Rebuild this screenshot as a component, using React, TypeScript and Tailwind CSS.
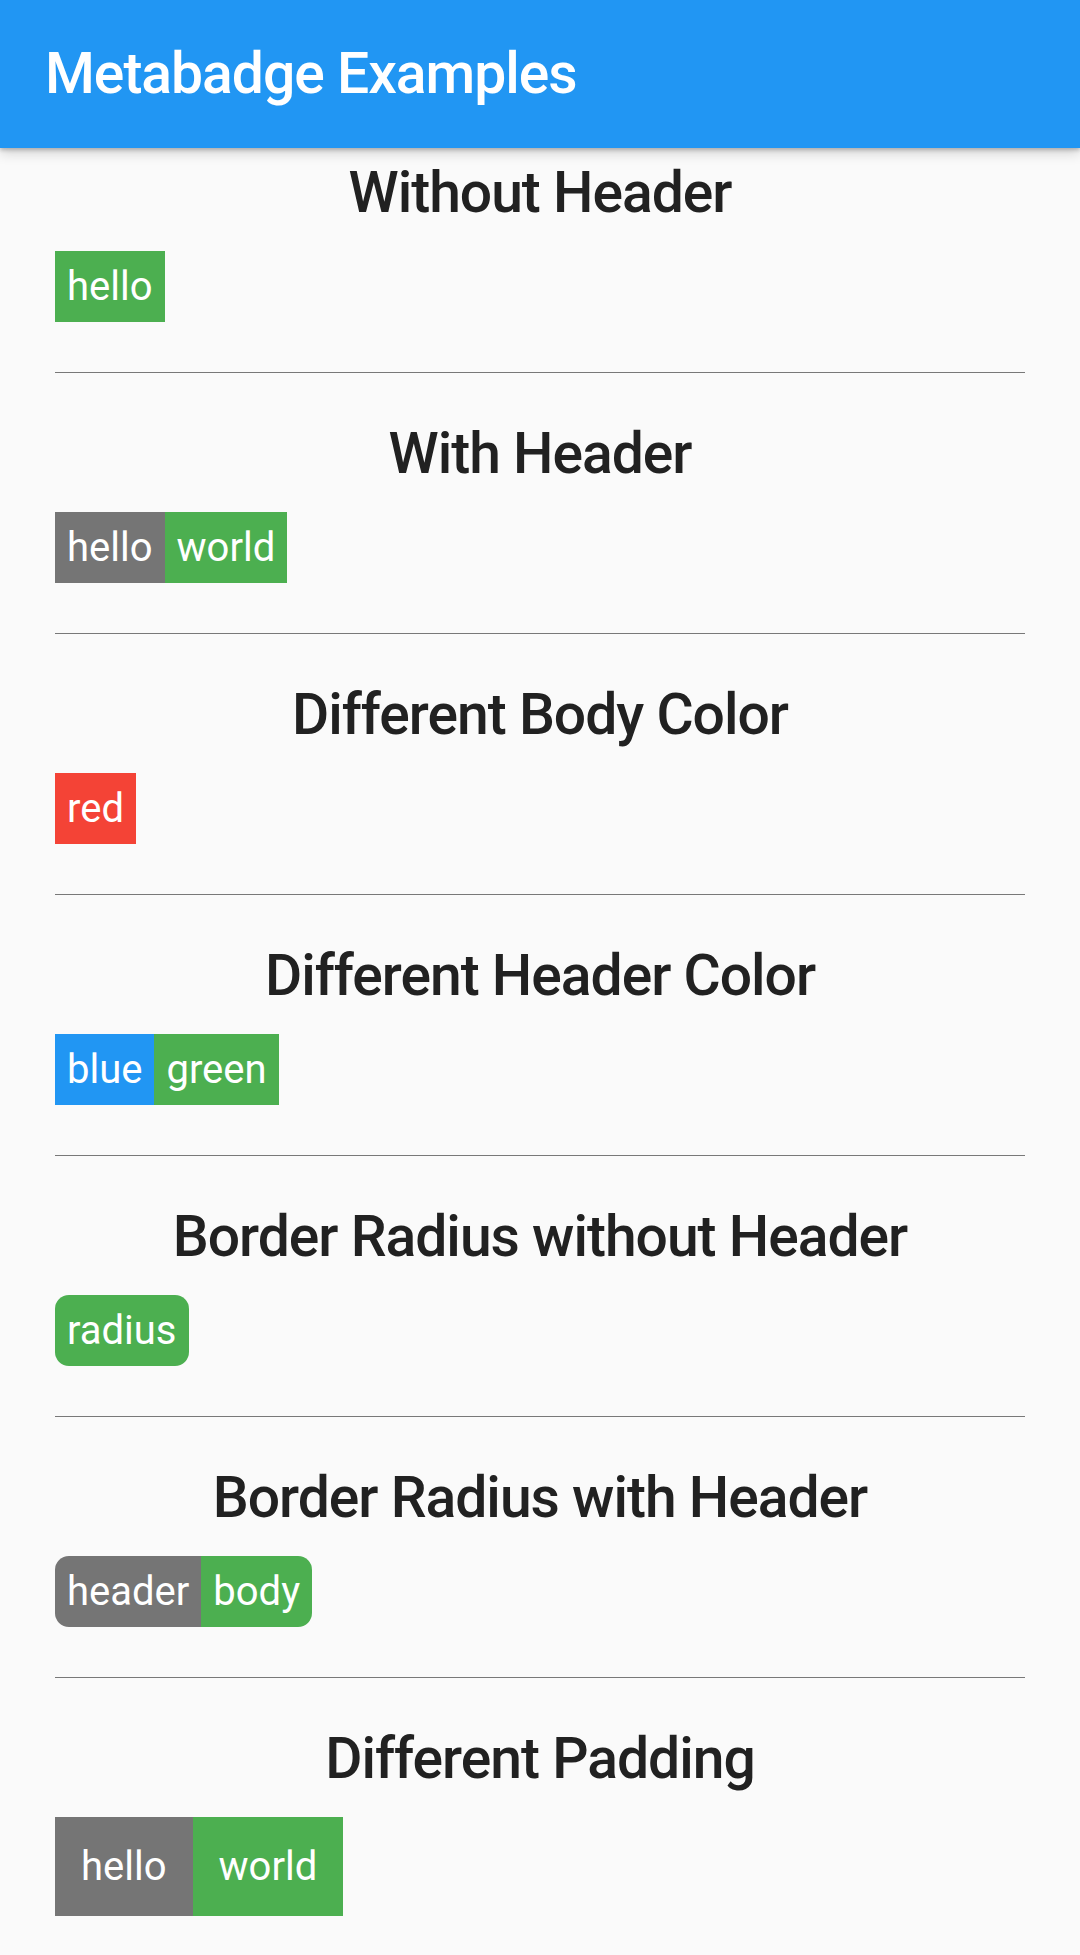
import React from 'react'

type Part = { text: string; color: string }

type Example = {
  title: string
  header?: Part
  body: Part
  rounded?: boolean
  big?: boolean
}

const GREEN = 'bg-[#4caf50]'
const GREY = 'bg-[#757575]'

const examples: Example[] = [
  { title: 'Without Header', body: { text: 'hello', color: GREEN } },
  {
    title: 'With Header',
    header: { text: 'hello', color: GREY },
    body: { text: 'world', color: GREEN },
  },
  { title: 'Different Body Color', body: { text: 'red', color: 'bg-[#f44336]' } },
  {
    title: 'Different Header Color',
    header: { text: 'blue', color: 'bg-[#2196f3]' },
    body: { text: 'green', color: GREEN },
  },
  { title: 'Border Radius without Header', body: { text: 'radius', color: GREEN }, rounded: true },
  {
    title: 'Border Radius with Header',
    header: { text: 'header', color: GREY },
    body: { text: 'body', color: GREEN },
    rounded: true,
  },
  {
    title: 'Different Padding',
    header: { text: 'hello', color: GREY },
    body: { text: 'world', color: GREEN },
    big: true,
  },
]

function Badge({ header, body, rounded, big }: Omit<Example, 'title'>) {
  const pad = big ? 'px-[26px] py-[25px]' : 'px-[12px] py-[11px]'
  return (
    <div className={`inline-flex overflow-hidden ${rounded ? 'rounded-[14px]' : ''}`}>
      {header && (
        <span className={`${header.color} ${pad} text-[40px] leading-[49px] text-white`}>
          {header.text}
        </span>
      )}
      <span className={`${body.color} ${pad} text-[40px] leading-[49px] text-white`}>
        {body.text}
      </span>
    </div>
  )
}

export default function App() {
  return (
    <div
      className="min-h-screen w-full bg-[#fafafa]"
      style={{ fontFamily: 'Roboto, "Noto Sans", sans-serif' }}
    >
      {/* App bar */}
      <header className="relative z-10 flex h-[148px] items-center bg-[#2196f3] pl-[45px] shadow-[0_2px_4px_rgba(0,0,0,0.22),0_5px_12px_rgba(0,0,0,0.16)]">
        <h1 className="text-[57px] font-medium leading-[70px] tracking-[-1px] text-white">
          Metabadge Examples
        </h1>
      </header>

      <main className="px-[55px] pt-[10px]">
        {examples.map((ex, i) => (
          <section key={ex.title}>
            <h2 className="text-center text-[57px] font-medium leading-[70px] tracking-[-1px] text-[#212121]">
              {ex.title}
            </h2>
            <div className="mt-[23px] flex">
              <Badge header={ex.header} body={ex.body} rounded={ex.rounded} big={ex.big} />
            </div>
            {i < examples.length - 1 && (
              <div className="mt-[50px] mb-[46px] h-px bg-[#787878]" />
            )}
          </section>
        ))}
      </main>
    </div>
  )
}
